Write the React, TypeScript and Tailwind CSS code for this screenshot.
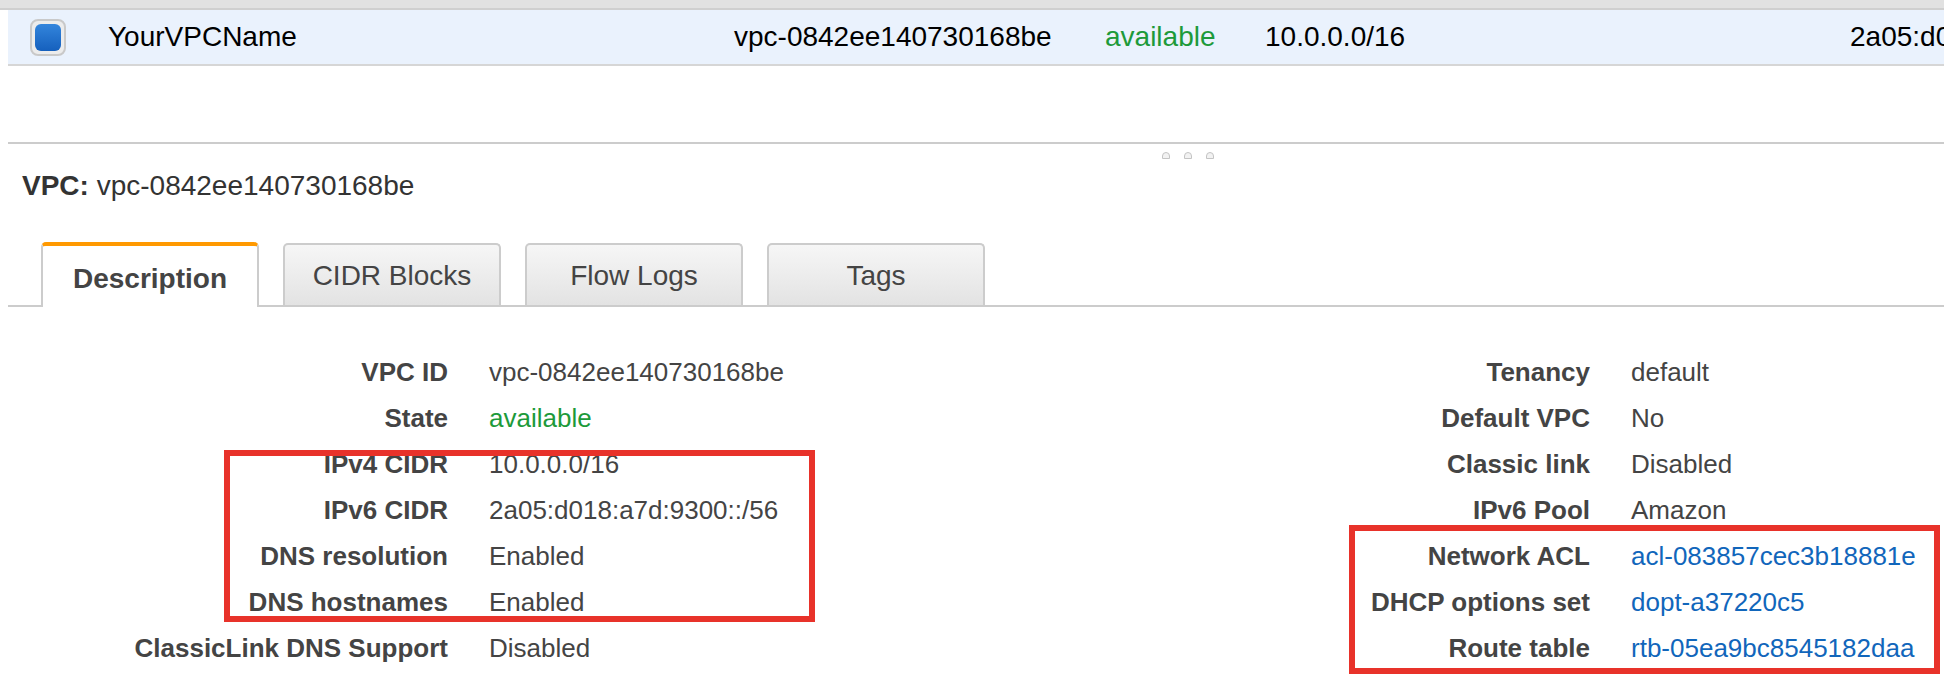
import React from 'react';

interface Field {
  label: string;
  value: string;
  tone?: 'green' | 'link';
}

const leftFields: Field[] = [
  { label: 'VPC ID', value: 'vpc-0842ee140730168be' },
  { label: 'State', value: 'available', tone: 'green' },
  { label: 'IPv4 CIDR', value: '10.0.0.0/16' },
  { label: 'IPv6 CIDR', value: '2a05:d018:a7d:9300::/56' },
  { label: 'DNS resolution', value: 'Enabled' },
  { label: 'DNS hostnames', value: 'Enabled' },
  { label: 'ClassicLink DNS Support', value: 'Disabled' },
];

const rightFields: Field[] = [
  { label: 'Tenancy', value: 'default' },
  { label: 'Default VPC', value: 'No' },
  { label: 'Classic link', value: 'Disabled' },
  { label: 'IPv6 Pool', value: 'Amazon' },
  { label: 'Network ACL', value: 'acl-083857cec3b18881e', tone: 'link' },
  { label: 'DHCP options set', value: 'dopt-a37220c5', tone: 'link' },
  { label: 'Route table', value: 'rtb-05ea9bc8545182daa', tone: 'link' },
];

const tabs = ['Description', 'CIDR Blocks', 'Flow Logs', 'Tags'];

const FieldRow = ({ field }: { field: Field }) => {
  const valueColor =
    field.tone === 'green' ? 'text-[#1d9a3a]' : field.tone === 'link' ? 'text-[#1166bb]' : 'text-[#444]';
  return (
    <div className="flex h-[46px] leading-[46px] text-[26px] whitespace-nowrap">
      <div className="w-[448px] text-right font-bold text-[#444]">{field.label}</div>
      <div className={`pl-[41px] ${valueColor}`}>{field.value}</div>
    </div>
  );
};

const App = () => {
  return (
    <div
      className="relative w-[1944px] h-[674px] overflow-hidden bg-white"
      style={{ fontFamily: '"Liberation Sans", Arial, sans-serif' }}
    >
      {/* Table header strip */}
      <div className="h-[10px] bg-[#e1e1e1] border-b-2 border-[#cfcfcf]" />

      {/* Selected row (last column runs past the window edge, as in the table) */}
      <div className="ml-[8px] h-[56px] flex items-center bg-[#eaf2fd] border-b-2 border-[#d6d6d6] text-[28px] leading-[32px] text-black whitespace-nowrap">
        <div className="w-[100px] pl-[22px] shrink-0">
          <div className="w-[36px] h-[37px] rounded-[8px] border-2 border-[#c9c9c9] bg-[#ececec] p-[3px]">
            <div className="w-full h-full rounded-[6px] bg-gradient-to-b from-[#3385dc] to-[#1560bd]" />
          </div>
        </div>
        <div className="w-[626px] shrink-0">YourVPCName</div>
        <div className="w-[371px] shrink-0">vpc-0842ee140730168be</div>
        <div className="w-[160px] shrink-0 text-[#1d9a3a]">available</div>
        <div className="w-[585px] shrink-0">10.0.0.0/16</div>
        <div className="shrink-0">2a05:d018:a7d:9300::/56</div>
      </div>

      <div className="h-[76px]" />
      <div className="ml-[8px] h-[2px] bg-[#cccccc]" />

      {/* Drag handle */}
      <div className="h-[22px] pt-[8px] pl-[1162px] flex gap-[14px]">
        {[0, 1, 2].map((i) => (
          <div key={i} className="w-[8px] h-[7px] rounded-t-full border border-[#c4c4c4] bg-[#f2f2f2]" />
        ))}
      </div>

      {/* Title */}
      <div className="h-[40px] leading-[40px] pl-[22px] text-[28px] text-[#333]">
        <span className="font-bold">VPC:</span> vpc-0842ee140730168be
      </div>

      {/* Tabs */}
      <div className="mt-[36px] ml-[8px] h-[65px] pl-[33px] flex items-end gap-[24px] border-b-2 border-[#cccccc]">
        {tabs.map((tab, i) =>
          i === 0 ? (
            <div
              key={tab}
              className="w-[218px] h-[65px] -mb-[2px] bg-white border-2 border-b-0 border-[#cccccc] border-t-4 border-t-[#ff9900] rounded-t-[5px] pt-[17px] text-center text-[28px] leading-[32px] font-bold text-[#444]"
            >
              {tab}
            </div>
          ) : (
            <div
              key={tab}
              className="w-[218px] h-[62px] bg-gradient-to-b from-[#f6f6f6] to-[#e3e3e3] border-2 border-b-0 border-[#cccccc] rounded-t-[5px] pt-[15px] text-center text-[28px] leading-[32px] text-[#444]"
            >
              {tab}
            </div>
          )
        )}
      </div>

      {/* Description fields */}
      <div className="mt-[42px] flex">
        <div className="w-[1142px] shrink-0">
          {leftFields.map((f) => (
            <FieldRow key={f.label} field={f} />
          ))}
        </div>
        <div className="shrink-0">
          {rightFields.map((f) => (
            <FieldRow key={f.label} field={f} />
          ))}
        </div>
      </div>

      {/* Annotation boxes */}
      <div className="absolute left-[224px] top-[450px] w-[591px] h-[172px] border-[6px] border-[#e8322a] pointer-events-none" />
      <div className="absolute left-[1349px] top-[525px] w-[591px] h-[149px] border-[6px] border-[#e8322a] pointer-events-none" />
    </div>
  );
};

export default App;
